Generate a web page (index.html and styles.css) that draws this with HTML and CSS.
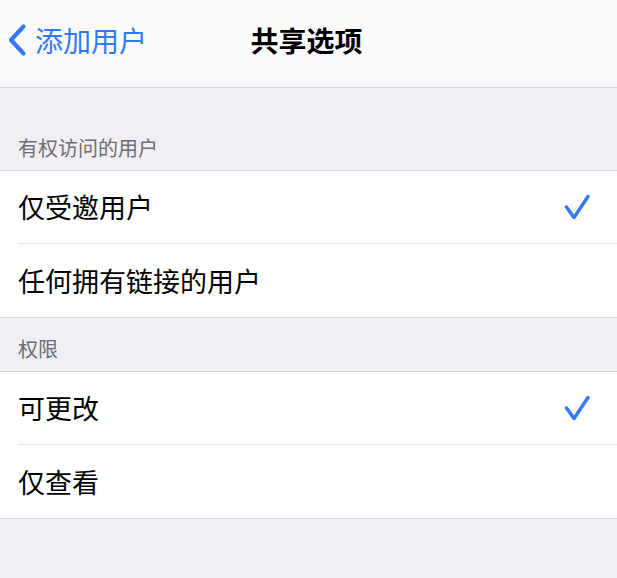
FILE: index.html
```html
<!DOCTYPE html>
<html lang="zh-CN">
<head>
<meta charset="utf-8">
<title>共享选项</title>
<link rel="stylesheet" href="styles.css">
</head>
<body>
<div class="screen">
  <header class="navbar">
    <div class="back">
      <svg class="chevron" width="20" height="34" viewBox="0 0 20 34" aria-hidden="true">
        <polyline points="16.5,3.5 4,17 16.5,30.5" fill="none" stroke="#3478f6" stroke-width="4.2" stroke-linecap="round" stroke-linejoin="round"/>
      </svg>
      <span class="back-label">添加用户</span>
    </div>
    <div class="title">共享选项</div>
    <div class="spacer"></div>
  </header>

  <section class="section first">
    <div class="section-header">有权访问的用户</div>
    <ul class="group">
      <li class="row">
        <span class="row-label">仅受邀用户</span>
        <svg class="check" width="26" height="26" viewBox="0 0 26 26" aria-hidden="true">
          <polyline points="2.5,13 10,23.5 24,2.5" fill="none" stroke="#3478f6" stroke-width="3.4" stroke-linecap="round" stroke-linejoin="round"/>
        </svg>
      </li>
      <li class="row">
        <span class="row-label">任何拥有链接的用户</span>
      </li>
    </ul>
  </section>

  <section class="section">
    <div class="section-header">权限</div>
    <ul class="group">
      <li class="row">
        <span class="row-label">可更改</span>
        <svg class="check" width="26" height="26" viewBox="0 0 26 26" aria-hidden="true">
          <polyline points="2.5,13 10,23.5 24,2.5" fill="none" stroke="#3478f6" stroke-width="3.4" stroke-linecap="round" stroke-linejoin="round"/>
        </svg>
      </li>
      <li class="row">
        <span class="row-label">仅查看</span>
      </li>
    </ul>
  </section>
</div>
</body>
</html>
```
FILE: styles.css
```css
html, body {
  margin: 0;
  padding: 0;
  background: #f0f0f4;
}

body {
  font-family: "Noto Sans CJK SC", "Noto Sans", sans-serif;
  color: #000;
}

.screen {
  width: 617px;
  min-height: 578px;
  background: #f0f0f4;
}

.navbar {
  height: 88px;
  box-sizing: border-box;
  padding-bottom: 7px;
  background: #fafafa;
  border-bottom: 1px solid #d8d8dc;
  display: grid;
  grid-template-columns: 1fr auto 1fr;
  align-items: center;
}

.back {
  display: flex;
  align-items: center;
  padding-left: 7px;
  color: #3478f6;
}

.chevron {
  display: block;
  margin-right: 8px;
}

.back-label {
  font-size: 28px;
  line-height: 34px;
}

.title {
  font-size: 28px;
  line-height: 34px;
  font-weight: 600;
  margin-left: -4px;
}

.section.first {
  padding-top: 29px;
}

.section-header {
  padding: 17px 18px 8px;
  font-size: 20px;
  line-height: 28px;
  color: #6d6d72;
}

.group {
  list-style: none;
  margin: 0;
  padding: 0 0 0 18px;
  background: #fff;
  border-top: 1px solid #d8d8dc;
  border-bottom: 1px solid #d8d8dc;
}

.row {
  height: 72px;
  display: flex;
  align-items: center;
  justify-content: space-between;
  padding-right: 27px;
}

.row:last-child {
  height: 73px;
}

.row + .row {
  border-top: 1px solid #e4e4e7;
}

.row-label {
  font-size: 27px;
  line-height: 34px;
}

.check {
  display: block;
}
```
